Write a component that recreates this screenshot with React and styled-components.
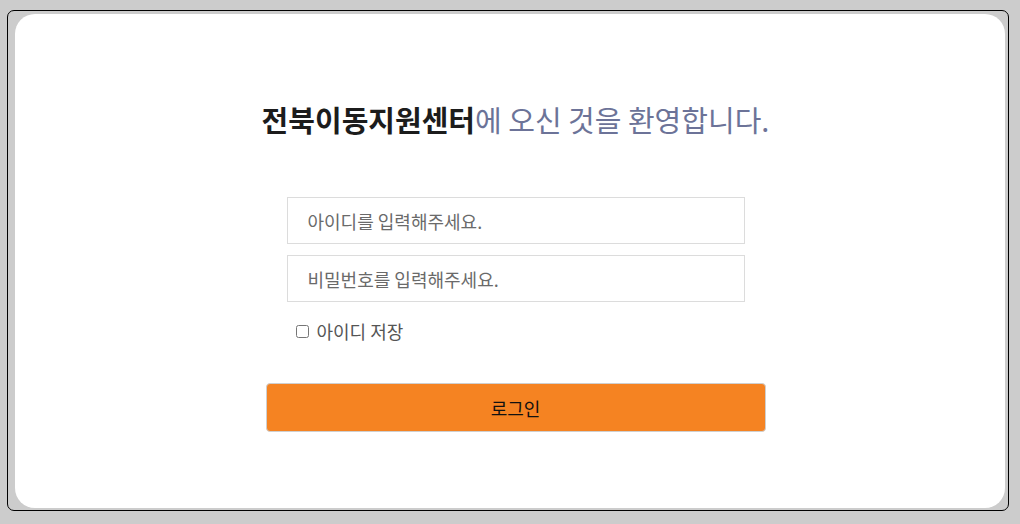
import React from 'react';
import styled, { createGlobalStyle } from 'styled-components';

const GlobalStyle = createGlobalStyle`
  html, body {
    margin: 0;
    padding: 0;
    background: #cccccc;
  }
  body {
    font-family: "Noto Sans CJK KR", "Noto Sans", sans-serif;
  }
`;

const Frame = styled.div`
  box-sizing: border-box;
  margin: 10px 11px 0 7px;
  height: 501px;
  border: 1px solid #000;
  border-radius: 7px;
  padding: 3px 3px 2px 7px;
  display: flex;
`;

const Card = styled.div`
  flex: 1;
  background: #fff;
  border-radius: 20px;
  padding: 85px 0 0 11px;
  display: flex;
  flex-direction: column;
  align-items: center;
`;

const Title = styled.h1`
  margin: 0 0 58px;
  font-size: 29px;
  line-height: 40px;
  font-weight: 400;
  color: #6c7398;
  white-space: nowrap;
`;

const Strong = styled.strong`
  font-weight: 700;
  color: #1c1c1c;
`;

const Form = styled.form`
  width: 500px;
  display: flex;
  flex-direction: column;
  align-items: center;
`;

const Field = styled.input`
  box-sizing: border-box;
  width: 458px;
  height: 47px;
  margin-bottom: ${p => p.$gap || 0}px;
  border: 1px solid #dcdcdc;
  padding: 0 20px;
  font-family: inherit;
  font-size: 18px;
  outline: none;
  &::placeholder {
    color: #6a6a6a;
  }
`;

const SaveRow = styled.label`
  align-self: stretch;
  display: flex;
  align-items: center;
  gap: 8px;
  margin-top: 19px;
  padding-left: 26px;
  height: 20px;
  font-size: 18px;
  color: #555;
`;

const Check = styled.input`
  margin: 0 0 0 4px;
  width: 13px;
  height: 13px;
`;

const LoginButton = styled.button`
  box-sizing: border-box;
  margin-top: 42px;
  width: 500px;
  height: 49px;
  background: #f58322;
  border: 1px solid #cfcfcf;
  border-radius: 4px;
  font-family: inherit;
  font-size: 18px;
  color: #111;
  cursor: pointer;
`;

export default function App() {
  return (
    <>
      <GlobalStyle />
      <Frame>
        <Card>
          <Title>
            <Strong>전북이동지원센터</Strong>에 오신 것을 환영합니다.
          </Title>
          <Form onSubmit={e => e.preventDefault()}>
            <Field type="text" placeholder="아이디를 입력해주세요." $gap={11} />
            <Field type="password" placeholder="비밀번호를 입력해주세요." />
            <SaveRow>
              <Check type="checkbox" />
              아이디 저장
            </SaveRow>
            <LoginButton type="submit">로그인</LoginButton>
          </Form>
        </Card>
      </Frame>
    </>
  );
}
